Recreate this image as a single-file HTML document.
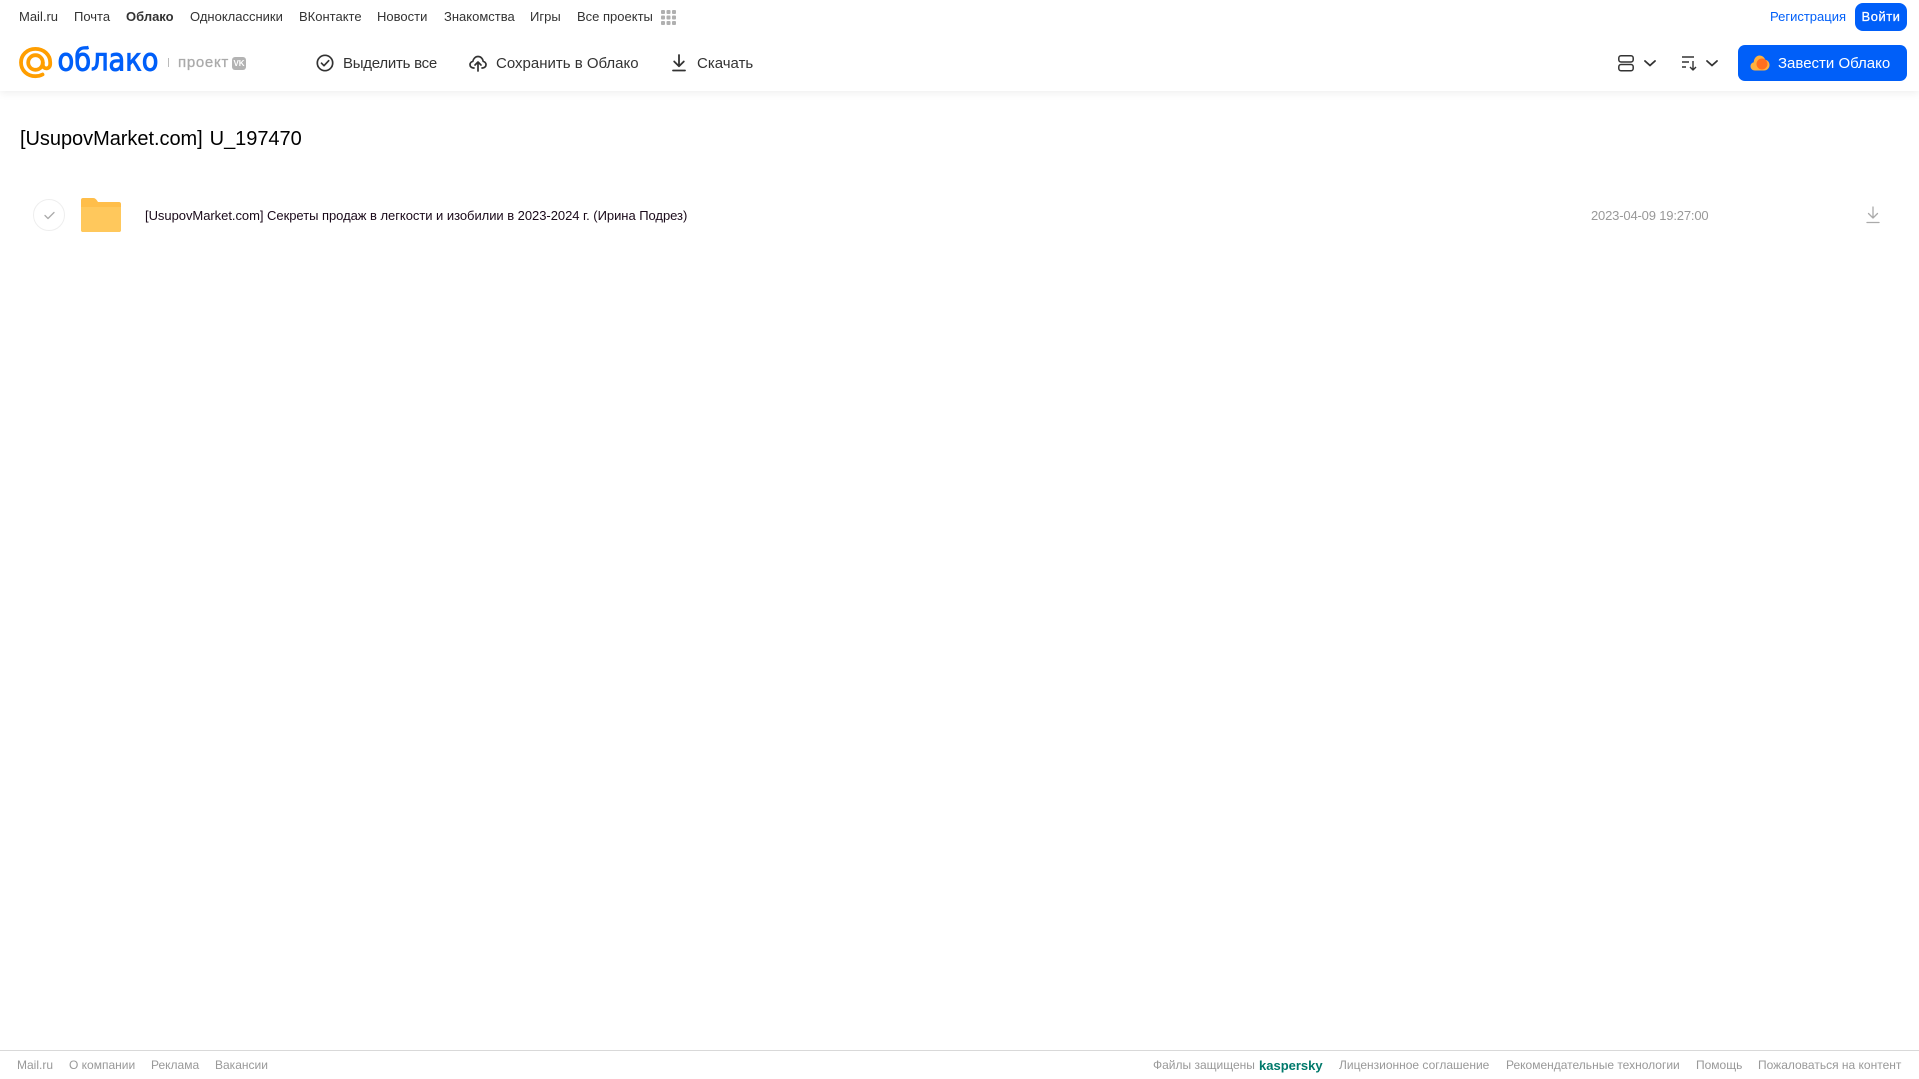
<!DOCTYPE html>
<html lang="ru">
<head>
<meta charset="utf-8">
<title>Облако</title>
<style>
html,body{margin:0;padding:0;background:#fff;}
body{width:1919px;height:1079px;position:relative;overflow:hidden;font-family:"Liberation Sans",Arial,sans-serif;}
.a{position:absolute;white-space:nowrap;}
.nav{top:8px;height:17px;line-height:17px;font-size:13px;color:#333;}
.tb{top:54px;height:20px;line-height:20px;font-size:15px;color:#333;}
.ft{top:1058px;height:15px;line-height:15px;font-size:12px;color:#999;}
svg{position:absolute;display:block;overflow:visible;}
</style>
</head>
<body>
<div class="a" style="left:0;top:0;width:1919px;height:91px;background:#fff;box-shadow:0 2px 8px rgba(0,0,0,.07);"></div>

<div class="a nav" style="left:19px">Mail.ru</div>
<div class="a nav" style="left:74px">Почта</div>
<div class="a nav" style="left:126px;font-weight:bold">Облако</div>
<div class="a nav" style="left:190px">Одноклассники</div>
<div class="a nav" style="left:299px">ВКонтакте</div>
<div class="a nav" style="left:377px">Новости</div>
<div class="a nav" style="left:444px">Знакомства</div>
<div class="a nav" style="left:530px">Игры</div>
<div class="a nav" style="left:577px">Все проекты</div>
<svg style="left:661px;top:10px" width="15" height="15" viewBox="0 0 15 15" fill="#b0b0b0">
<rect x="0" y="0" width="4" height="4" rx="1"/><rect x="5.500" y="0" width="4" height="4" rx="1"/><rect x="11" y="0" width="4" height="4" rx="1"/>
<rect x="0" y="5.500" width="4" height="4" rx="1"/><rect x="5.500" y="5.500" width="4" height="4" rx="1"/><rect x="11" y="5.500" width="4" height="4" rx="1"/>
<rect x="0" y="11" width="4" height="4" rx="1"/><rect x="5.500" y="11" width="4" height="4" rx="1"/><rect x="11" y="11" width="4" height="4" rx="1"/>
</svg>

<div class="a nav" style="left:1770px;color:#005ff9">Регистрация</div>
<div class="a" style="left:1855px;top:3px;width:52px;height:28px;line-height:27px;background:#005ff9;border-radius:8px;color:#fff;font-size:13px;text-align:center;letter-spacing:.5px;-webkit-text-stroke:.25px #fff">Войти</div>

<svg style="left:0;top:0" width="200" height="91" viewBox="0 0 200 91">
<circle cx="35.500" cy="62.500" r="7.300" fill="none" stroke="#ff9e00" stroke-width="3.800"/>
<path d="M42.800 62.500v2.200c0 5 7.400 5 7.400-.8v-1.400C50.200 54.500 43.500 48.900 35.500 48.900 27 48.900 21 55 21 62.500 21 70.500 27.300 76.200 35.500 76.200c2.700 0 4.900-.6 7-1.700" fill="none" stroke="#ff9e00" stroke-width="3.800" stroke-linecap="round"/>
<text x="57.500" y="70.500" font-family="DejaVu Sans" font-size="31" fill="#005ff9" stroke="#005ff9" stroke-width="1" textLength="101" lengthAdjust="spacingAndGlyphs">облако</text>
<rect x="168" y="58" width="1" height="9" fill="#bbb"/>
</svg>
<div class="a" style="left:178px;top:53px;height:20px;line-height:20px;font-size:15px;color:#aaa;letter-spacing:.7px;-webkit-text-stroke:.3px #aaa">проект</div>
<div class="a" style="left:232px;top:57px;width:14px;height:13px;border-radius:3px;background:#b3b3b3;color:#fff;font-size:8px;font-weight:bold;line-height:13px;text-align:center">VK</div>

<svg style="left:316px;top:54px" width="18" height="18" viewBox="0 0 18 18" fill="none" stroke="#333" stroke-width="1.700">
<circle cx="9" cy="9" r="7.700"/><path d="M5.500 9.200l2.500 2.500 4.700-5" stroke-linecap="round" stroke-linejoin="round"/>
</svg>
<div class="a tb" style="left:343px;letter-spacing:-.25px">Выделить все</div>

<svg style="left:469px;top:54px" width="18" height="18" viewBox="0 0 18 18" fill="none" stroke="#333" stroke-width="1.700" stroke-linecap="round" stroke-linejoin="round">
<path d="M5 14H4.500C2.500 14 1 12.500 1 10.700 1 9 2.200 7.700 3.800 7.400 4.300 4.700 6.400 2.500 9 2.500c2.700 0 4.800 2.100 5.200 4.900 1.600.3 2.800 1.600 2.800 3.300 0 1.800-1.500 3.300-3.500 3.300H13"/>
<path d="M9 17V8.500M6 11l3-3 3 3"/>
</svg>
<div class="a tb" style="left:496px">Сохранить в Облако</div>

<svg style="left:671px;top:54px" width="16" height="18" viewBox="0 0 16 18" fill="none" stroke="#333" stroke-width="1.800" stroke-linecap="round" stroke-linejoin="round">
<path d="M8 1v11M3.200 7.500L8 12.300l4.800-4.800"/><path d="M2 16.500h12"/>
</svg>
<div class="a tb" style="left:697px">Скачать</div>

<svg style="left:1618px;top:55px" width="16" height="17" viewBox="0 0 16 17" fill="none" stroke="#333" stroke-width="1.500">
<rect x=".8" y=".8" width="14.400" height="6.200" rx="2.200"/><rect x=".8" y="9.500" width="14.400" height="6.200" rx="2.200"/>
</svg>
<svg style="left:1644px;top:60px" width="12" height="7" viewBox="0 0 12 7" fill="none" stroke="#333" stroke-width="1.800" stroke-linecap="round" stroke-linejoin="round"><path d="M1 1l5 4.500L11 1"/></svg>
<svg style="left:1681px;top:55px" width="17" height="16" viewBox="0 0 17 16" fill="none" stroke="#333" stroke-width="1.400">
<path d="M1 2h12M1 7h7M1 12h4"/><path d="M12 6v9M9 12l3 3 3-3" stroke-linejoin="round"/>
</svg>
<svg style="left:1706px;top:60px" width="12" height="7" viewBox="0 0 12 7" fill="none" stroke="#333" stroke-width="1.800" stroke-linecap="round" stroke-linejoin="round"><path d="M1 1l5 4.500L11 1"/></svg>

<div class="a" style="left:1738px;top:45px;width:169px;height:36px;background:#005ff9;border-radius:7px"></div>
<svg style="left:1750px;top:54px" width="20" height="18" viewBox="0 0 20 18">
<path d="M5 16.500C2 16.500.5 14.500.5 12.300.5 10.200 2 8.700 3.700 8.300 4 4.300 6.500 1.500 9.500 1.500c2.800 0 5 1.800 5.700 4.300 2.500.4 4.300 2.500 4.300 5.200 0 3-2.300 5.500-5.500 5.500z" fill="#ffb13d"/>
<circle cx="12" cy="10" r="5.500" fill="#ff6f1f"/>
</svg>
<div class="a" style="left:1778px;top:54px;height:20px;line-height:20px;font-size:15px;color:#fff">Завести Облако</div>

<div class="a" style="left:20px;top:125px;height:28px;line-height:28px;font-size:20px;color:#000;letter-spacing:-.04px;word-spacing:1.500px">[UsupovMarket.com] U_197470</div>

<div class="a" style="left:33px;top:199px;width:30px;height:30px;border:1px solid #eee;border-radius:50%"></div>
<svg style="left:44px;top:211px" width="11" height="9" viewBox="0 0 11 9" fill="none" stroke="#aaa" stroke-width="1.300" stroke-linecap="round" stroke-linejoin="round"><path d="M1 4.500l3 3L10 1.500"/></svg>

<svg style="left:81px;top:198px" width="40" height="34" viewBox="0 0 40 34">
<path d="M2 0h10c2 0 3 1 4 2.500L17 4h21c1.200 0 2 .8 2 2v26c0 1.200-.8 2-2 2H2c-1.200 0-2-.8-2-2V2C0 .8.800 0 2 0z" fill="#ffbe4a"/>
<path d="M0 9h40v23c0 1.200-.8 2-2 2H2c-1.200 0-2-.8-2-2z" fill="#ffc85c"/>
</svg>

<div class="a" style="left:145px;top:207px;height:17px;line-height:17px;font-size:13px;color:#1a0a1a;letter-spacing:-.04px">[UsupovMarket.com] Секреты продаж в легкости и изобилии в 2023-2024 г. (Ирина Подрез)</div>
<div class="a" style="left:1591px;top:207px;height:17px;line-height:17px;font-size:13px;color:#999;letter-spacing:-.17px">2023-04-09 19:27:00</div>
<svg style="left:1866px;top:206px" width="14" height="18" viewBox="0 0 14 18" fill="none" stroke="#aaa" stroke-width="1.300" stroke-linecap="round" stroke-linejoin="round"><path d="M7 1v11M2.500 7.500L7 12l4.500-4.500"/><path d="M1 16.500h12"/></svg>

<div class="a" style="left:0;top:1050px;width:1919px;height:1px;background:#d9d9d9"></div>
<div class="a ft" style="left:17px">Mail.ru</div>
<div class="a ft" style="left:69px">О компании</div>
<div class="a ft" style="left:151px">Реклама</div>
<div class="a ft" style="left:215px">Вакансии</div>
<div class="a ft" style="left:1153px">Файлы защищены</div>
<div class="a ft" style="left:1259px;font-size:13px;font-weight:bold;color:#00796b">kaspersky</div>
<div class="a ft" style="left:1339px">Лицензионное соглашение</div>
<div class="a ft" style="left:1506px">Рекомендательные технологии</div>
<div class="a ft" style="left:1696px">Помощь</div>
<div class="a ft" style="left:1758px">Пожаловаться на контент</div>
</body>
</html>
